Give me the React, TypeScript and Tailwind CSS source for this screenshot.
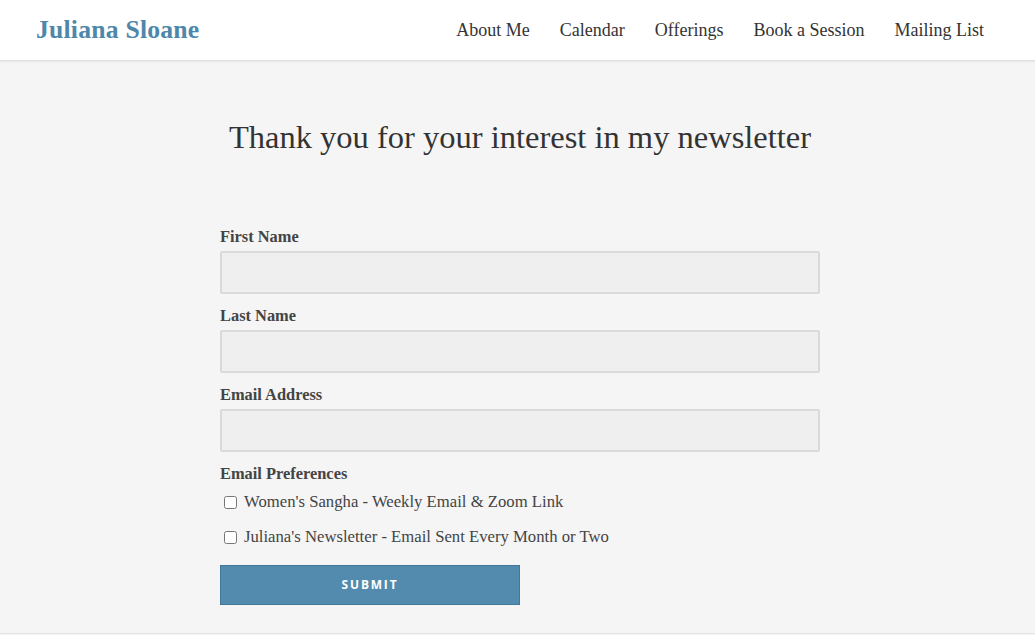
const navItems = ["About Me", "Calendar", "Offerings", "Book a Session", "Mailing List"];

const fields = ["First Name", "Last Name", "Email Address"];

const prefs = [
  "Women's Sangha - Weekly Email & Zoom Link",
  "Juliana's Newsletter - Email Sent Every Month or Two",
];

const serif = "font-['Liberation_Serif',serif]";

export default function App() {
  return (
    <div className={`min-h-screen bg-[#f5f5f5] text-[#333] ${serif}`}>
      <header className="h-[61px] bg-white border-b border-[#dedede] shadow-[0_1px_2px_rgba(0,0,0,0.06)] flex items-center justify-between pl-9 pr-[51px]">
        <a className="text-[25.7px] font-bold text-[#4e87aa] tracking-[0.2px]">Juliana Sloane</a>
        <nav className="flex gap-[30px] text-[18px] text-[#333]">
          {navItems.map((item) => (
            <a key={item}>{item}</a>
          ))}
        </nav>
      </header>

      <main className="h-[573px] border-b border-[#e4e4e4] pt-[56px] pl-[5px]">
        <h1 className="text-center text-[32.5px] leading-[40px]">
          Thank you for your interest in my newsletter
        </h1>

        <form className="w-[600px] mx-auto mt-[70px]">
          {fields.map((f) => (
            <div key={f} className="mt-3 first:mt-0">
              <label className="block text-[16.4px] font-bold leading-5 mb-1 text-[#444]">{f}</label>
              <input
                type="text"
                className="block w-full h-[43px] bg-[#efefef] border-2 border-[#dadada] rounded-[2px] outline-none"
              />
            </div>
          ))}

          <div className="mt-3">
            <div className="text-[16.4px] font-bold leading-5 text-[#444]">Email Preferences</div>
            <div className="mt-[8px] flex flex-col gap-[15px]">
              {prefs.map((p) => (
                <label key={p} className="flex items-center gap-[7px] pl-1 text-[16.7px] leading-5 text-[#444]">
                  <input type="checkbox" className="w-[13px] h-[13px] m-0" />
                  <span>{p}</span>
                </label>
              ))}
            </div>
          </div>

          <button
            type="button"
            className="mt-[18px] w-[300px] h-10 bg-[#528bae] border border-[#41789a] text-white text-[12px] font-bold tracking-[1.8px] font-['Open_Sans',sans-serif]"
          >
            SUBMIT
          </button>
        </form>
      </main>
    </div>
  );
}
